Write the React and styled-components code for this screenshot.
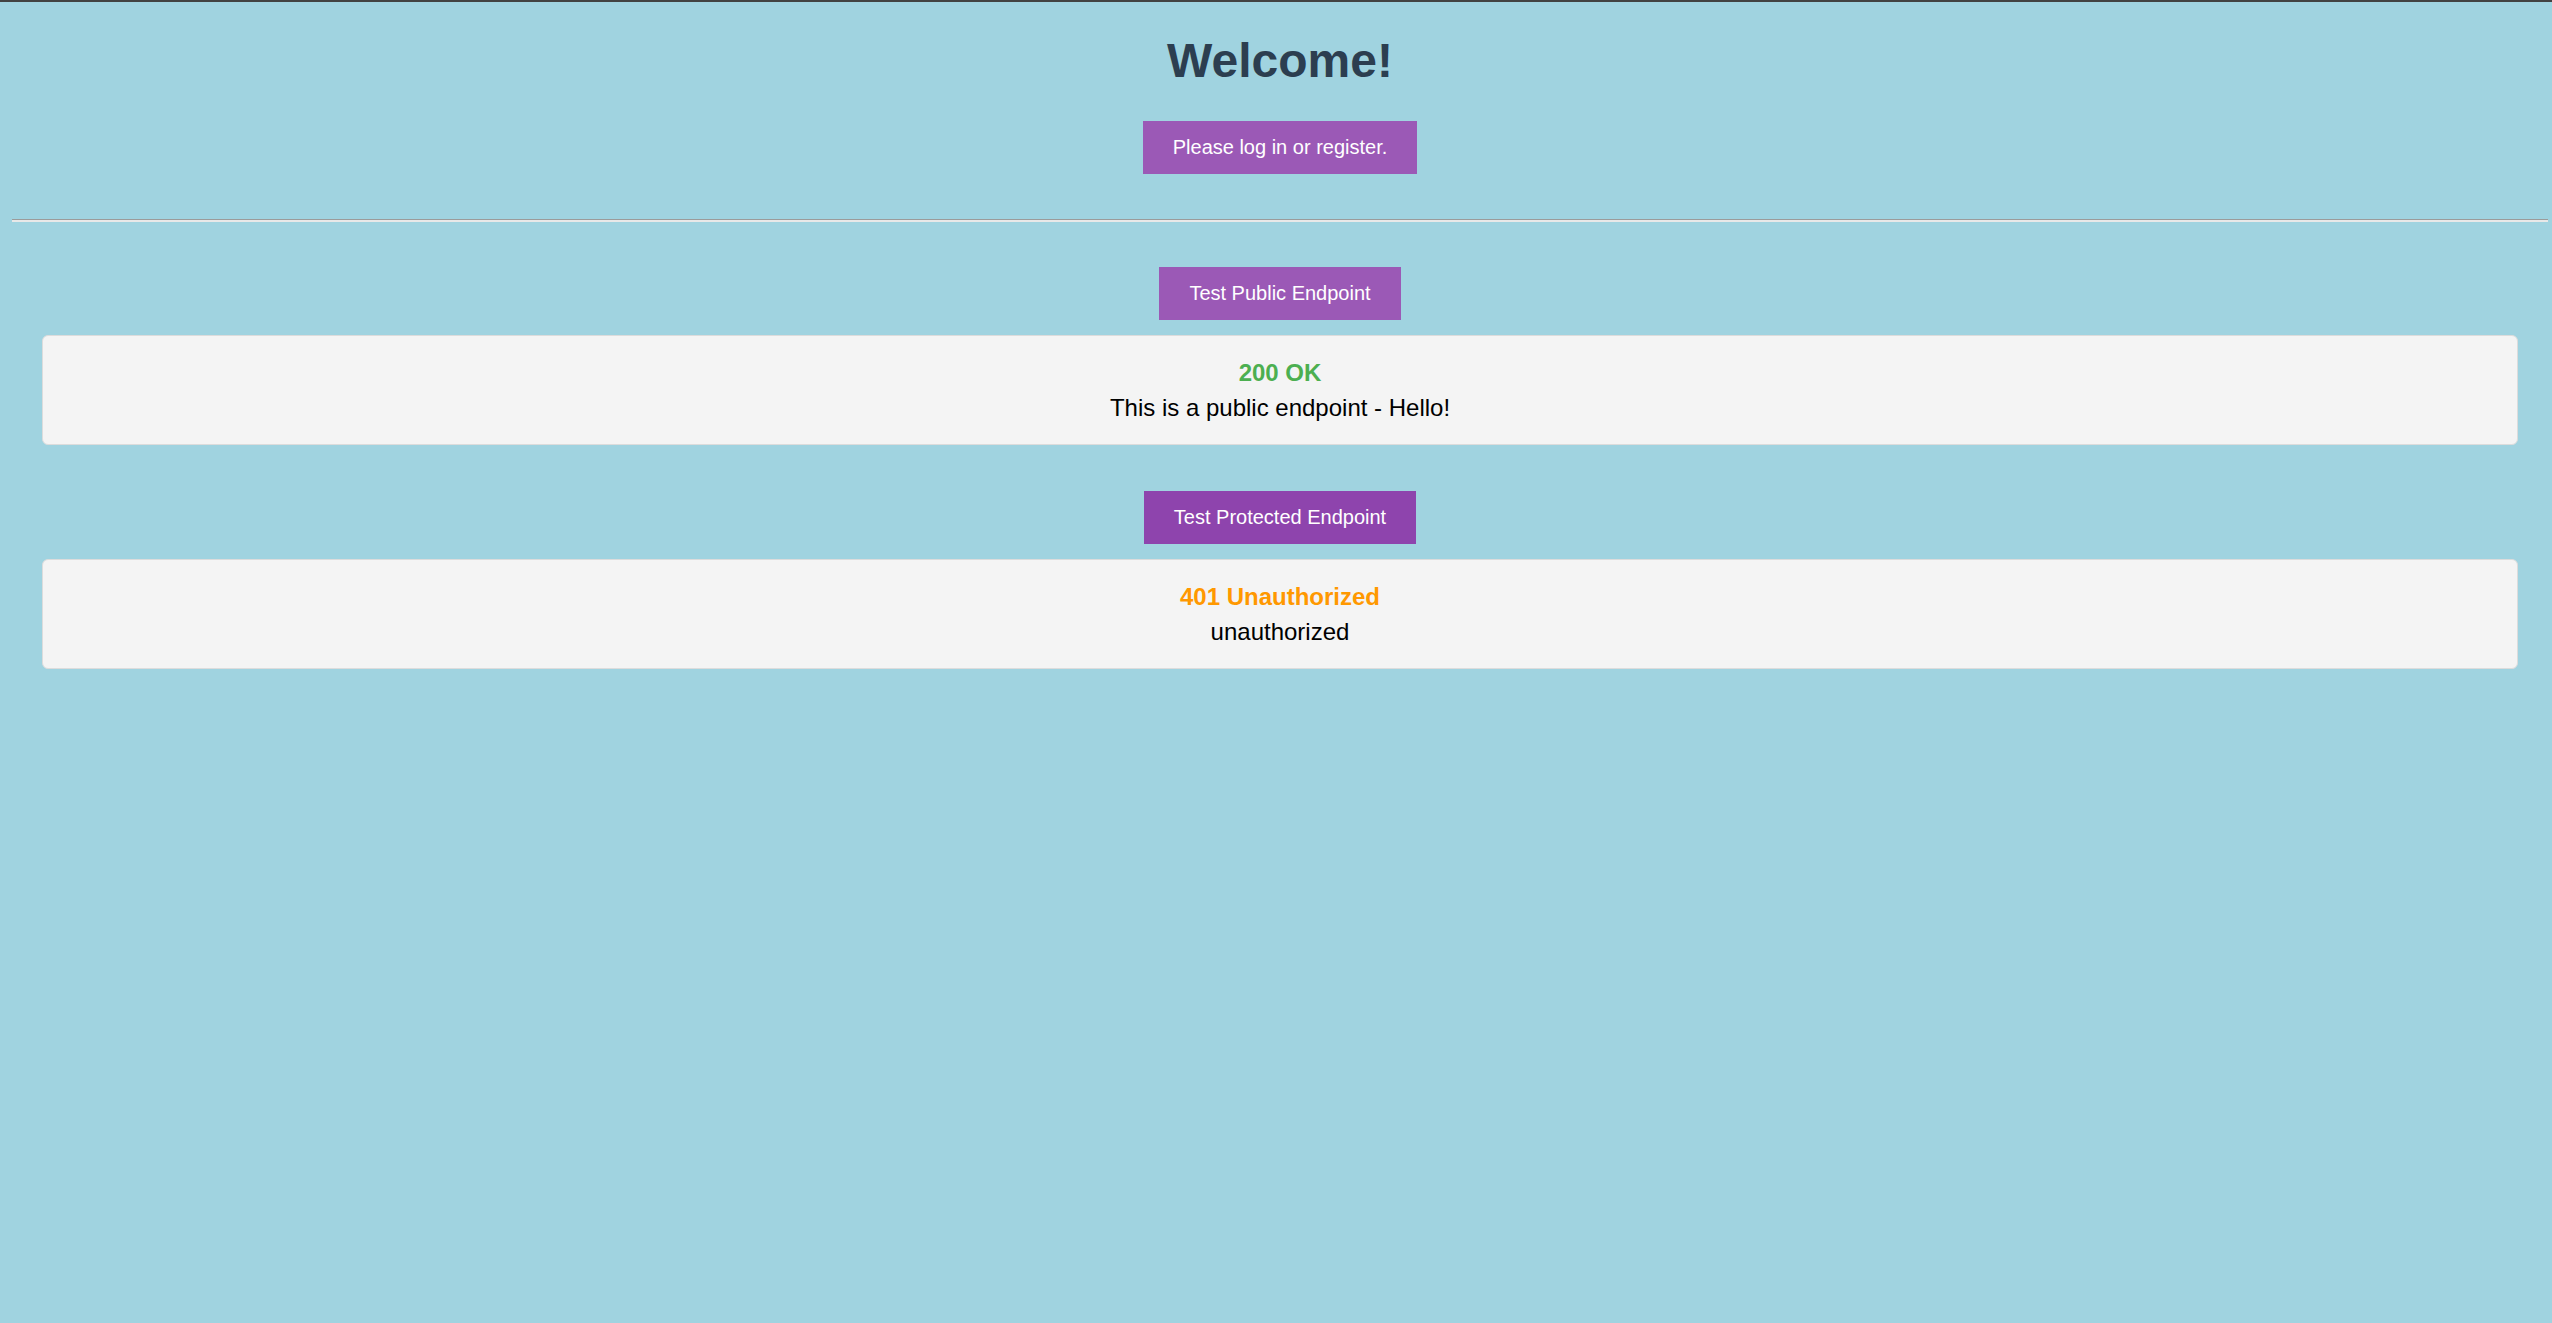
import styled, { createGlobalStyle } from "styled-components";

const GlobalStyle = createGlobalStyle`
  html, body {
    margin: 0;
    padding: 0;
    background: #a0d3e0;
  }

  body {
    font-family: "Liberation Sans", Arial, sans-serif;
  }
`;

const endpoints = [
  {
    label: "Test Public Endpoint",
    status: "200 OK",
    ok: true,
    message: "This is a public endpoint - Hello!",
    active: false,
  },
  {
    label: "Test Protected Endpoint",
    status: "401 Unauthorized",
    ok: false,
    message: "unauthorized",
    active: true,
  },
];

export default function App() {
  return (
    <>
      <GlobalStyle />
      <TopBar />
      <Page>
        <Header>
          <Title>Welcome!</Title>
          <Button>Please log in or register.</Button>
        </Header>
        <Divider />
        {endpoints.map((item) => (
          <Section key={item.label}>
            <Button $active={item.active}>{item.label}</Button>
            <ResultBox>
              <Status $ok={item.ok}>{item.status}</Status>
              <Message>{item.message}</Message>
            </ResultBox>
          </Section>
        ))}
      </Page>
    </>
  );
}

const TopBar = styled.div`
  height: 2px;
  background: #424242;
`;

const Page = styled.div`
  min-height: calc(100vh - 2px);
  padding: 31px 4px 40px 12px;
  box-sizing: border-box;
`;

const Header = styled.div`
  display: flex;
  flex-direction: column;
  align-items: center;
`;

const Title = styled.h1`
  margin: 0 0 33px;
  font-size: 48px;
  line-height: 55px;
  font-weight: 700;
  color: #2c3e50;
`;

const Button = styled.button`
  display: block;
  margin: 0 auto;
  padding: 15px 30px;
  font-family: "Liberation Sans", Arial, sans-serif;
  font-size: 20px;
  line-height: 23px;
  color: #fff;
  background: ${(p) => (p.$active ? "#8e44ad" : "#9b59b6")};
  border: none;
  border-radius: 0;
  cursor: pointer;
`;

const Divider = styled.hr`
  margin: 45px 0 0;
  height: 0;
  border: none;
  border-top: 1px solid #9b9b9b;
  border-bottom: 2px solid #e8e8e8;
`;

const Section = styled.section`
  display: flex;
  flex-direction: column;
  gap: 15px;
  margin-top: 45px;

  & + & {
    margin-top: 46px;
  }
`;

const ResultBox = styled.div`
  margin: 0 30px;
  padding: 23px;
  text-align: center;
  background: #f4f4f4;
  border: 1px solid #dcdcdc;
  border-radius: 6px;
`;

const Status = styled.div`
  margin-bottom: 8px;
  font-size: 24px;
  line-height: 27px;
  font-weight: 700;
  color: ${(p) => (p.$ok ? "#4caf50" : "#ff9800")};
`;

const Message = styled.div`
  font-size: 24px;
  line-height: 27px;
  color: #000;
`;
